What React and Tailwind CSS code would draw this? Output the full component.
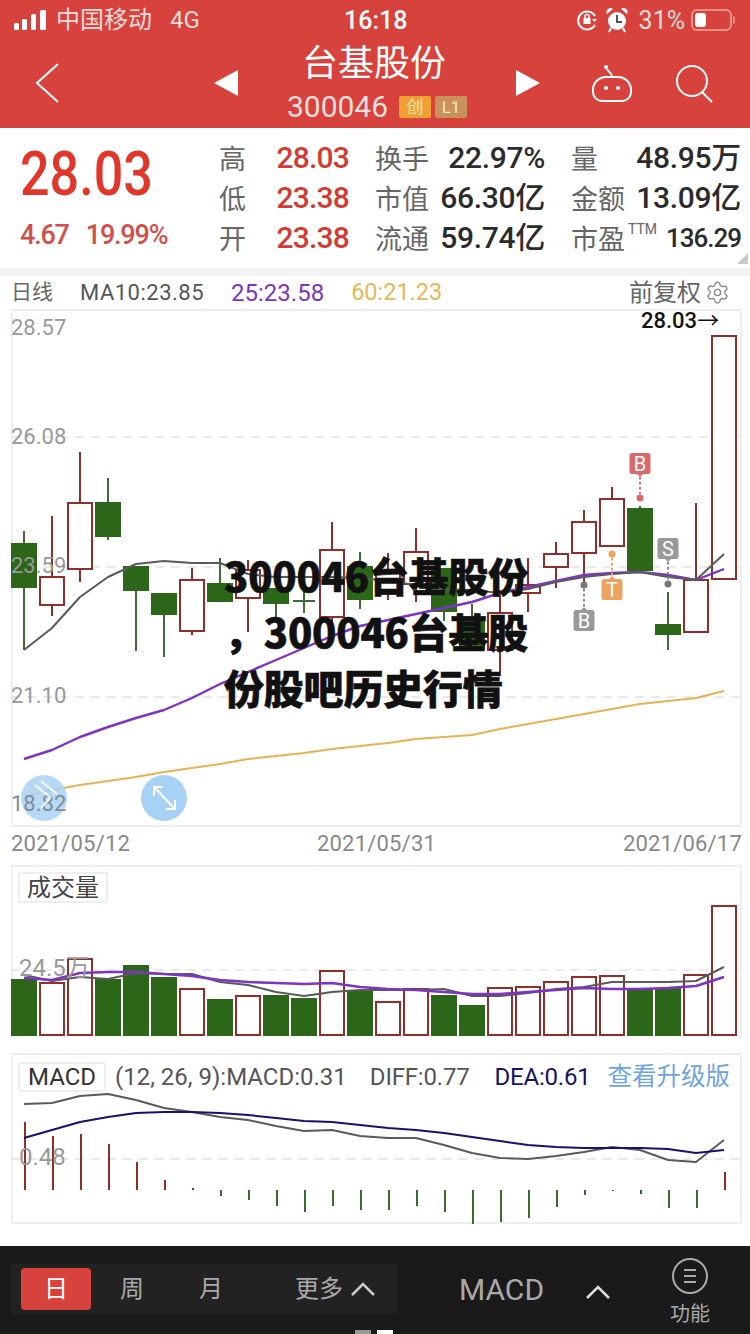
import React from "react";
import { Settings } from "lucide-react";

const FONT = "font-['Roboto','Noto_Sans_CJK_SC',sans-serif]";
const RED = "#8e2f2b";
const GREEN = "#2c6618";
const GRAY = "#5a5a5a";
const PURPLE = "#7d33c4";
const GOLD = "#e5b256";
const NAVY = "#14146e";

const xAt = (i) => 24 + 28 * i;

// [type, top of body, bottom of body, top of wick, bottom of wick]
const candles = [
  ["g", 543, 588, 531, 650],
  ["r", 577, 605, 516, 616],
  ["r", 503, 569, 452, 582],
  ["g", 502, 537, 478, 540],
  ["g", 566, 591, 566, 651],
  ["g", 593, 615, 593, 657],
  ["r", 580, 631, 568, 635],
  ["g", 583, 602, 558, 602],
  ["r", 570, 598, 560, 632],
  ["g", 588, 604, 588, 618],
  ["d", 601, 601, 585, 613],
  ["r", 550, 617, 522, 627],
  ["g", 566, 600, 552, 609],
  ["r", 572, 592, 553, 600],
  ["r", 552, 584, 528, 602],
  ["g", 568, 612, 568, 621],
  ["g", 620, 650, 604, 650],
  ["r", 613, 650, 590, 672],
  ["r", 585, 593, 558, 612],
  ["r", 554, 567, 542, 588],
  ["r", 522, 553, 510, 585],
  ["r", 499, 546, 487, 546],
  ["g", 508, 571, 506, 571],
  ["g", 624, 635, 592, 650],
  ["r", 580, 632, 503, 632],
  ["r", 336, 579, 336, 579],
];

const ma10 = [650, 628, 597, 577, 564, 561, 563, 563, 574, 577, 577, 577, 578, 581, 585, 589, 590, 593, 589, 582, 577, 574, 572, 577, 580, 554];
const ma25 = [759, 750, 737, 727, 718, 710, 698, 684, 672, 660, 648, 636, 626, 620, 614, 608, 602, 593, 587, 581, 575, 573, 572, 575, 580, 569];
const ma60 = [796, 790, 785, 781, 777, 772, 768, 764, 759, 756, 753, 749, 746, 743, 739, 737, 735, 729, 724, 719, 714, 709, 704, 701, 698, 691];

const volTops = [979, 983, 959, 979, 965, 977, 989, 999, 996, 995, 998, 971, 990, 1002, 989, 995, 1005, 988, 987, 982, 977, 976, 989, 988, 975, 906];
const volTypes = "grrgggrgrggrgrrggrrrrrggrr";
const volGray = [975, 981, 977, 979, 973, 974, 974, 982, 985, 992, 996, 992, 990, 990, 990, 989, 996, 996, 993, 989, 987, 982, 982, 982, 981, 967];
const volPurple = [978, 980, 973, 972, 972, 974, 976, 980, 982, 983, 984, 983, 987, 989, 990, 992, 994, 994, 992, 990, 988, 989, 989, 988, 986, 977];

const macdEnds = [1122, 1136, 1134, 1144, 1162, 1180, 1188, 1196, 1200, 1206, 1212, 1206, 1210, 1210, 1206, 1212, 1224, 1222, 1218, 1207, 1195, 1191, 1194, 1208, 1208, 1172];
const macdGray = [1104, 1103, 1096, 1094, 1100, 1108, 1112, 1117, 1120, 1126, 1131, 1130, 1136, 1138, 1138, 1145, 1153, 1158, 1159, 1156, 1152, 1147, 1150, 1160, 1162, 1140];
const macdNavy = [1138, 1130, 1122, 1117, 1113, 1112, 1112, 1113, 1115, 1118, 1121, 1122, 1125, 1128, 1130, 1133, 1137, 1141, 1145, 1147, 1148, 1148, 1148, 1149, 1153, 1150];

function Line({ data, color, width = 2 }) {
  const points = data.map((y, i) => `${xAt(i)},${y}`).join(" ");
  return <polyline points={points} fill="none" stroke={color} strokeWidth={width} strokeLinejoin="round" />;
}

function AxisLabel({ x, y, children, size = 22 }) {
  return (
    <text x={x} y={y} fontSize={size} fill="#999" fontFamily="Roboto, 'Noto Sans CJK SC', sans-serif">
      {children}
    </text>
  );
}

function Grid({ y }) {
  return <line x1="11" x2="742" y1={y} y2={y} stroke="#e2e2e2" strokeWidth="1.5" strokeDasharray="9 7" />;
}

function Tag({ x, y, letter, color, up }) {
  // small rounded flag with a notch towards the dotted line
  return (
    <g>
      <rect x={x - 10.5} y={y} width="21" height="21" rx="2.5" fill={color} />
      <path d={up ? `M${x - 3} ${y} L${x} ${y - 3} L${x + 3} ${y}Z` : `M${x - 3} ${y + 21} L${x} ${y + 24} L${x + 3} ${y + 21}Z`} fill={color} />
      <text x={x} y={y + 17.5} textAnchor="middle" fontSize="20" fill="#fff" fontFamily="Roboto, sans-serif">
        {letter}
      </text>
    </g>
  );
}

function Dotted({ x, y1, y2, color }) {
  return <line x1={x} x2={x} y1={y1} y2={y2} stroke={color} strokeWidth="2" strokeDasharray="2.5 2.5" />;
}

function KlineSvg() {
  return (
    <svg width="731" height="518" viewBox="11 309 731 518" className="absolute top-[-2px] left-[-2px] overflow-visible">
      <Grid y={437} />
      <Grid y={567} />
      <Grid y={697} />
      {candles.map(([type, top, bottom, wickTop, wickBottom], i) => {
        const x = xAt(i);
        if (type === "d") {
          return (
            <g key={i} stroke="#3f6b36" strokeWidth="2">
              <line x1={x} x2={x} y1={wickTop} y2={wickBottom} />
              <line x1={x - 11} x2={x + 11} y1={top} y2={top} />
            </g>
          );
        }
        if (type === "g") {
          return (
            <g key={i}>
              <line x1={x} x2={x} y1={wickTop} y2={wickBottom} stroke="#3f6b36" strokeWidth="2" />
              <rect x={x - 13} y={top} width="26" height={bottom - top} fill={GREEN} />
            </g>
          );
        }
        return (
          <g key={i}>
            <line x1={x} x2={x} y1={wickTop} y2={top} stroke={RED} strokeWidth="2" />
            <line x1={x} x2={x} y1={bottom} y2={wickBottom} stroke={RED} strokeWidth="2" />
            <rect x={x - 12} y={top} width="24" height={bottom - top} fill="#fff" stroke={RED} strokeWidth="2" />
          </g>
        );
      })}
      <Line data={ma60} color={GOLD} />
      <Line data={ma25} color={PURPLE} width={2.4} />
      <Line data={ma10} color={GRAY} />

      <Tag x={640} y={453} letter="B" color="#d9696c" />
      <Dotted x={640} y1={477} y2={494} color="#d9696c" />
      <circle cx="640" cy="498" r="3.5" fill="#d9696c" />

      <circle cx="612" cy="554" r="3.5" fill="#eda25e" />
      <Dotted x={612} y1={558} y2={579} color="#eda25e" />
      <Tag x={612} y={579} letter="T" color="#eda25e" up />

      <circle cx="584" cy="585" r="3.5" fill="#777" />
      <Dotted x={584} y1={589} y2={607} color="#8a8a8a" />
      <Tag x={584} y={610} letter="B" color="#999" up />

      <Tag x={668} y={538} letter="S" color="#999" />
      <Dotted x={668} y1={562} y2={580} color="#8a8a8a" />
      <circle cx="668" cy="584" r="3.5" fill="#777" />

      <AxisLabel x={11} y={335}>28.57</AxisLabel>
      <AxisLabel x={11} y={444}>26.08</AxisLabel>
      <AxisLabel x={11} y={573}>23.59</AxisLabel>
      <AxisLabel x={11} y={703}>21.10</AxisLabel>
      <text x="641" y="328" fontSize="22" fontWeight="500" fill="#111" fontFamily="Roboto, sans-serif">
        28.03<tspan fontFamily="'Noto Sans CJK SC', sans-serif" fontWeight="400">→</tspan>
      </text>

      <circle cx="44" cy="798" r="23" fill="#a8d2f5" fillOpacity="0.85" />
      <text x="11" y="811" fontSize="22" fill="#808c96" fontFamily="Roboto, sans-serif">18.82</text>
      <path d="M35 785l16 13M41 781l16 13M50 798l-9 10" fill="none" stroke="#fff" strokeWidth="2" opacity="0.85" />
      <circle cx="164" cy="798" r="23" fill="#a8d2f5" />
      <path d="M155 788l19 20M154 796v-9h9M175 800v9h-9" fill="none" stroke="#fff" strokeWidth="2" />
    </svg>
  );
}

function VolumeSvg() {
  return (
    <svg width="731" height="173" viewBox="11 865 731 173" className="absolute top-[-2px] left-[-2px]">
      <Grid y={970} />
      {volTops.map((top, i) => {
        const x = xAt(i);
        return volTypes[i] === "g" ? (
          <rect key={i} x={x - 13} y={top} width="26" height={1036 - top} fill={GREEN} />
        ) : (
          <rect key={i} x={x - 12} y={top} width="24" height={1035 - top} fill="#fff" stroke={RED} strokeWidth="2" />
        );
      })}
      <Line data={volGray} color={GRAY} />
      <Line data={volPurple} color={PURPLE} width={2.4} />
      <AxisLabel x={19} y={976} size={24}>24.5万</AxisLabel>
    </svg>
  );
}

function MacdSvg() {
  return (
    <svg width="731" height="171" viewBox="11 1053 731 171" className="absolute top-[-2px] left-[-2px]">
      <Grid y={1159} />
      {macdEnds.map((end, i) => {
        const x = xAt(i) + 1;
        const up = end < 1190;
        return (
          <line key={i} x1={x} x2={x} y1={1190} y2={end} stroke={up ? RED : "#3c6a30"} strokeWidth="2" />
        );
      })}
      <Line data={macdGray} color={GRAY} />
      <Line data={macdNavy} color={NAVY} />
      <AxisLabel x={19} y={1165} size={24}>0.48</AxisLabel>
    </svg>
  );
}

function StatusBar() {
  return (
    <div className="relative flex h-[40px] items-center pl-[14px] pr-[15px] text-white">
      <svg width="32" height="22" viewBox="0 0 32 22" fill="#fff">
        <rect x="0" y="14" width="5" height="7" rx="1.5" />
        <rect x="8" y="10" width="5" height="11" rx="1.5" />
        <rect x="17" y="5" width="5" height="16" rx="1.5" />
        <rect x="26" y="1" width="6" height="20" rx="1.5" />
      </svg>
      <span className="ml-[10px] text-[24px] leading-none text-[#f5dcda]">中国移动</span>
      <span className="ml-[18px] text-[24px] leading-none text-[#f5dcda]">4G</span>
      <span className="absolute left-[344px] text-[25px] font-medium leading-none">16:18</span>
      <div className="ml-auto flex items-center">
        <svg width="22" height="24" viewBox="0 0 22 24" fill="none" stroke="#fff" strokeWidth="2">
          <path d="M19 8a9 9 0 1 0 0 9" />
          <path d="M16 11h5l-2.5 3z" fill="#fff" stroke="none" />
          <rect x="7.5" y="10" width="7" height="6" fill="#fff" stroke="none" />
          <path d="M9 10V8.5a2 2 0 0 1 4 0V10" strokeWidth="1.5" />
        </svg>
        <svg className="ml-[8px]" width="22" height="26" viewBox="0 0 22 26" fill="#fff">
          <circle cx="11" cy="14" r="9" />
          <path d="M1 7a4 4 0 0 1 6-5zM21 7a4 4 0 0 0-6-5z" />
          <path d="M5 21l-2 4M17 21l2 4" fill="none" stroke="#fff" strokeWidth="2" />
          <path d="M11 8v7h5" fill="none" stroke="#555" strokeWidth="2" />
        </svg>
        <span className="ml-[11px] text-[25px] leading-none text-[#f5dcda]">31%</span>
        <div className="ml-[6px] flex h-[22px] w-[41px] items-center rounded-[6px] border-2 border-[#ee8f8a] p-[2px]">
          <div className="h-[14px] w-[11px] rounded-[3px] bg-white" />
        </div>
        <div className="ml-[1px] h-[8px] w-[2px] rounded-r bg-[#ee8f8a]" />
      </div>
    </div>
  );
}

function NavBar() {
  return (
    <div className="relative flex h-[88px] items-start text-white">
      <svg className="ml-[35px] mt-[23px]" width="24" height="40" viewBox="0 0 24 40" fill="none" stroke="#fff" strokeWidth="2">
        <path d="M23 1L2 20l21 19" />
      </svg>
      <svg className="ml-[155px] mt-[30px]" width="24" height="26" viewBox="0 0 24 26" fill="#fff">
        <path d="M24 0v26L0 13z" />
      </svg>
      <div className="ml-[48px] flex w-[182px] flex-col items-center">
        <div className="mr-[6px] mt-[2px] text-[36px] leading-[44px]">台基股份</div>
        <div className="flex items-center text-[30px] leading-[42px] text-[#f8dedc]">
          <span>300046</span>
          <span className="ml-[11px] flex h-[22px] w-[32px] items-center justify-center rounded-[2px] bg-[#f0a033] text-[17px] leading-none text-[#fbe3bd]">创</span>
          <span className="ml-[4px] flex h-[22px] w-[32px] items-center justify-center rounded-[2px] bg-[#c9925a] text-[17px] leading-none text-[#f5e3cc]">L1</span>
        </div>
      </div>
      <svg className="ml-[48px] mt-[30px]" width="24" height="26" viewBox="0 0 24 26" fill="#fff">
        <path d="M0 0v26l24-13z" />
      </svg>
      <svg className="ml-[52px] mt-[24px]" width="40" height="40" viewBox="0 0 40 40" fill="none" stroke="#fff" strokeWidth="2">
        <path d="M10 37h20a9 9 0 0 0 9-9v-2a13 13 0 0 0-13-13H14A13 13 0 0 0 1 26v2a9 9 0 0 0 9 9z" />
        <path d="M20 13C20 8 16 8 15 5" />
        <circle cx="14" cy="3" r="2" fill="#fff" stroke="none" />
        <circle cx="14" cy="24" r="2" fill="#fff" stroke="none" />
        <circle cx="26" cy="24" r="2" fill="#fff" stroke="none" />
      </svg>
      <svg className="ml-[44px] mt-[25px]" width="38" height="38" viewBox="0 0 38 38" fill="none" stroke="#fff" strokeWidth="2">
        <circle cx="16" cy="16" r="15" />
        <path d="M26 27l10 10" />
      </svg>
    </div>
  );
}

function Quote() {
  const label = "mt-[5px] text-[27px] leading-none text-[#666]";
  const red = "text-[30px] leading-none font-medium tracking-[-0.8px] text-[#d43a32]";
  const dark = "text-[30px] leading-none font-medium tracking-[-0.3px] text-[#2b2b2b]";
  return (
    <div className="relative flex h-[140px] bg-white">
      <div className="w-[219px] pl-[20px]">
        <div className="mt-[11px] origin-left scale-x-[0.84] text-[62px] font-medium leading-[70px] text-[#e0372a]">28.03</div>
        <div className="mt-[10px] flex text-[27px] font-medium leading-[32px] text-[#d24f4c]">
          <span className="tracking-[-1.2px]">4.67</span>
          <span className="ml-[17px] tracking-[-1.2px]">19.99%</span>
        </div>
      </div>
      <div className="mt-[10px] grid h-[120px] grid-cols-[130px_170px_170px] grid-rows-3 items-center gap-x-[26px]">
        <div className="flex items-center justify-between"><span className={label}>高</span><span className={red}>28.03</span></div>
        <div className="flex items-center justify-between"><span className={label}>换手</span><span className={dark}>22.97%</span></div>
        <div className="flex items-center justify-between"><span className={label}>量</span><span className={dark}>48.95万</span></div>
        <div className="flex items-center justify-between"><span className={label}>低</span><span className={red}>23.38</span></div>
        <div className="flex items-center justify-between"><span className={label}>市值</span><span className={dark}>66.30亿</span></div>
        <div className="flex items-center justify-between"><span className={label}>金额</span><span className={dark}>13.09亿</span></div>
        <div className="flex items-center justify-between"><span className={label}>开</span><span className={red}>23.38</span></div>
        <div className="flex items-center justify-between"><span className={label}>流通</span><span className={dark}>59.74亿</span></div>
        <div className="flex items-center justify-between">
          <span className={label}>市盈</span>
          <span className="mb-[18px] ml-[3px] text-[14px] leading-none text-[#666]">TTM</span>
          <span className="ml-auto text-[26px] font-medium leading-none tracking-[-1px] text-[#2b2b2b]">136.29</span>
        </div>
      </div>
      <svg className="absolute right-[2px] bottom-[4px]" width="11" height="11" viewBox="0 0 11 11" fill="#c9c9c9">
        <path d="M11 0v11H0z" />
      </svg>
    </div>
  );
}

function BottomBar() {
  return (
    <div className="relative mt-[22px] flex h-[88px] bg-[#1a1a1a] text-[#aaa]">
      <div className="ml-[11px] mt-[18px] flex h-[50px] w-[387px] items-center bg-[#222] pl-[10px]">
        <div className="flex h-[42px] w-[70px] items-center justify-center rounded-[4px] bg-[#d7423c] text-[24px] text-white">日</div>
        <span className="ml-[29px] text-[24px]">周</span>
        <span className="ml-[55px] text-[24px]">月</span>
        <span className="ml-[72px] text-[24px]">更多</span>
        <svg className="ml-[8px]" width="24" height="14" viewBox="0 0 24 14" fill="none" stroke="#ccc" strokeWidth="2.5">
          <path d="M1 13L12 2l11 11" />
        </svg>
      </div>
      <span className="ml-[61px] mt-[26px] text-[30px] leading-[36px]">MACD</span>
      <svg className="ml-[42px] mt-[39px]" width="24" height="14" viewBox="0 0 24 14" fill="none" stroke="#ddd" strokeWidth="2.5">
        <path d="M1 13L12 2l11 11" />
      </svg>
      <div className="ml-[61px] mt-[12px] flex w-[38px] flex-col items-center">
        <div className="flex h-[36px] w-[36px] shrink-0 flex-col items-center justify-center gap-[4px] rounded-full border-2 border-[#aaa]">
          <div className="h-[2px] w-[12px] bg-[#aaa]" />
          <div className="h-[2px] w-[12px] bg-[#aaa]" />
          <div className="h-[2px] w-[12px] bg-[#aaa]" />
        </div>
        <span className="mt-[8px] whitespace-nowrap text-[20px] leading-[24px]">功能</span>
      </div>
      <div className="absolute bottom-0 left-[355px] h-[4px] w-[16px] bg-[#999]" />
      <div className="absolute bottom-0 left-[377px] h-[4px] w-[16px] bg-white" />
    </div>
  );
}

export default function App() {
  return (
    <div className={`relative h-[1334px] w-[750px] overflow-hidden bg-white ${FONT}`}>
      <div className="bg-[#d7423c]">
        <StatusBar />
        <NavBar />
      </div>
      <Quote />
      <div className="h-[8px] bg-[#f3f3f3]" />

      <div className="flex h-[33px] items-center pl-[11px] pr-[20px] text-[22px] leading-none">
        <span className="text-[21px] text-[#666]">日线</span>
        <span className="ml-[27px] tracking-[0.5px] text-[#555]">MA10:23.85</span>
        <span className="ml-[27px] text-[24px] text-[#7b35c0]">25:23.58</span>
        <span className="ml-[27px] text-[23.5px] text-[#e3b95a]">60:21.23</span>
        <span className="ml-auto text-[24px] text-[#666]">前复权</span>
        <Settings className="ml-[4px]" size={25} strokeWidth={1.3} color="#888" />
      </div>

      <div className="relative ml-[11px] h-[518px] w-[731px] border-2 border-[#eee]">
        <KlineSvg />
      </div>
      <div className="flex h-[38px] items-center justify-between pb-[4px] pl-[11px] pr-[8px] text-[22px] leading-none tracking-[0.2px] text-[#888]">
        <span>2021/05/12</span>
        <span>2021/05/31</span>
        <span>2021/06/17</span>
      </div>

      <div className="relative ml-[11px] h-[173px] w-[731px] border-2 border-b-0 border-[#eee]">
        <VolumeSvg />
        <div className="absolute left-[5px] top-[5px] flex h-[31px] w-[90px] items-center justify-center rounded-[2px] border-2 border-[#eee] text-[24px] leading-none text-[#444]">成交量</div>
      </div>

      <div className="relative ml-[11px] mt-[15px] h-[171px] w-[731px] border-2 border-[#eee]">
        <MacdSvg />
        <div className="absolute left-[5px] right-[10px] top-[7px] flex items-center text-[24px] leading-none">
          <div className="flex h-[30px] w-[88px] items-center justify-center rounded-[3px] border-2 border-[#eee] text-[#333]">MACD</div>
          <span className="ml-[9px] text-[#555]">(12, 26, 9):MACD:0.31</span>
          <span className="ml-[23px] tracking-[-0.2px] text-[#555]">DIFF:0.77</span>
          <span className="ml-[25px] tracking-[-0.2px] text-[#14145f]">DEA:0.61</span>
          <span className="ml-auto text-[24.5px] text-[#6fa4dc]">查看升级版</span>
        </div>
      </div>

      <BottomBar />

      <div className="absolute left-[224px] top-[547px] w-[310px] font-['Noto_Sans_CJK_SC',sans-serif] text-[40px] font-black leading-[56px] tracking-[-0.2px] text-[#111] [-webkit-text-stroke:0.6px_#111]">
        <div className="whitespace-nowrap">300046台基股份</div>
        <div className="whitespace-nowrap">，300046台基股</div>
        <div className="whitespace-nowrap">份股吧历史行情</div>
      </div>
    </div>
  );
}
